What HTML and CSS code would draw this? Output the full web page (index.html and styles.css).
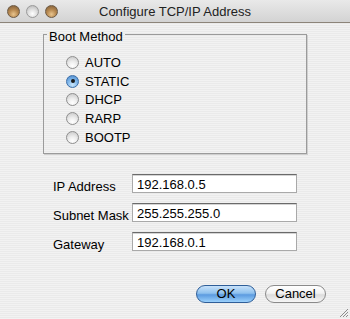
FILE: index.html
```html
<!DOCTYPE html>
<html lang="en">
<head>
    <meta charset="UTF-8">
    <meta name="viewport" content="width=device-width, initial-scale=1.0">
    <title>Configure TCP/IP Address</title>
    <link rel="stylesheet" href="styles.css">
</head>
<body>
    <div class="window">
        <div class="titlebar">
            <div class="lights">
                <span class="light close"></span>
                <span class="light mini"></span>
                <span class="light zoom"></span>
            </div>
            <div class="title">Configure TCP/IP Address</div>
        </div>
        <div class="content">
            <fieldset class="group">
                <legend>Boot Method</legend>
                <label class="radio"><span class="dot"></span>AUTO</label>
                <label class="radio"><span class="dot on"></span>STATIC</label>
                <label class="radio"><span class="dot"></span>DHCP</label>
                <label class="radio"><span class="dot"></span>RARP</label>
                <label class="radio"><span class="dot"></span>BOOTP</label>
            </fieldset>
            <div class="fields">
                <label class="field-label">IP Address</label>
                <div class="input">192.168.0.5</div>
                <label class="field-label">Subnet Mask</label>
                <div class="input">255.255.255.0</div>
                <label class="field-label">Gateway</label>
                <div class="input">192.168.0.1</div>
            </div>
            <div class="buttons">
                <button class="btn default">OK</button>
                <button class="btn">Cancel</button>
            </div>
        </div>
        <svg class="grip" width="10" height="10" viewBox="0 0 10 10">
            <path d="M2 10 L10 2 M5 10 L10 5 M8 10 L10 8" stroke="#8c8c8c" stroke-width="1"/>
        </svg>
    </div>
</body>
</html>
```

FILE: styles.css
```css
body {
    margin: 0;
    font-family: "Liberation Sans", Arial, sans-serif;
    font-size: 13px;
    color: #000;
}
.window {
    position: relative;
    width: 350px;
    height: 319px;
    overflow: hidden;
    background: repeating-linear-gradient(#f2f2f2 0 1px, #eaeaea 1px 2px);
}
.titlebar {
    height: 22px;
    border-bottom: 1px solid #8c8479;
    background: linear-gradient(#e9e9e9, #d3d3d3);
    display: flex;
    align-items: center;
    position: relative;
}
.lights {
    display: flex;
    gap: 6px;
    padding-left: 7px;
}
.light {
    width: 13px;
    height: 13px;
    border-radius: 50%;
    box-sizing: border-box;
    border: 1px solid #6d5a44;
}
.close, .zoom {
    background: radial-gradient(circle at 50% 75%, #e9c58e 0, #b88a52 45%, #7a5a36 100%);
}
.mini {
    border-color: #9a9a9a;
    background: radial-gradient(circle at 50% 70%, #ffffff 0, #dcdcdc 50%, #b0b0b0 100%);
}
.title {
    flex: 1;
    text-align: center;
    padding-right: 58px;
    color: #222;
    font-size: 13px;
}
.content {
    padding-top: 2px;
}
.group {
    margin: 0 0 0 43px;
    width: 264px;
    box-sizing: border-box;
    padding: 10px 0 6px 0;
    border: 1px solid #9b9b9b;
    box-shadow: 1px 1px 0 #cfcfcf;
    display: flex;
    flex-direction: column;
}
.group legend {
    margin-left: 3px;
    padding: 5px 2px 0;
    line-height: 13px;
}
.radio {
    display: flex;
    align-items: center;
    gap: 6px;
    height: 18.75px;
    margin-left: 22px;
}
.dot {
    width: 13px;
    height: 13px;
    border-radius: 50%;
    box-sizing: border-box;
    border: 1px solid #8e8e8e;
    background: radial-gradient(circle at 50% 80%, #ffffff 0, #eeeeee 40%, #c4c4c4 100%);
    display: flex;
    align-items: center;
    justify-content: center;
}
.dot.on {
    border-color: #3c6ea8;
    background: radial-gradient(circle at 50% 80%, #c9e6fb 0, #7db5ea 50%, #4a86c8 100%);
}
.dot.on::after {
    content: "";
    width: 4px;
    height: 4px;
    border-radius: 50%;
    background: #1a1a1a;
}
.fields {
    margin: 20px 0 0 53px;
    display: grid;
    grid-template-columns: 79px 165px;
    row-gap: 10px;
}
.field-label {
    padding-top: 6px;
    line-height: 13px;
    white-space: nowrap;
}
.input {
    height: 19px;
    box-sizing: border-box;
    padding: 1px 4px 0;
    line-height: 17px;
    background: #fff;
    border: 1px solid #a9a9a9;
    border-top-color: #6a6a6a;
    box-shadow: inset 0 1px 0 #d4d4d4;
}
.buttons {
    display: flex;
    justify-content: flex-end;
    gap: 9px;
    margin-top: 34px;
    padding-right: 24px;
}
.btn {
    font-family: inherit;
    font-size: 13px;
    height: 18px;
    width: 61px;
    padding: 0;
    border-radius: 9px;
    border: 1px solid #8a8a8a;
    background: linear-gradient(#ffffff 0, #f2f2f2 45%, #dcdcdc 55%, #f6f6f6 100%);
    color: #000;
    line-height: 16px;
}
.btn.default {
    width: 60px;
    border-color: #2f5e98;
    background: linear-gradient(#c8e2fa 0, #8fc1ee 45%, #5c9be0 55%, #9ad0fb 100%);
}
.grip {
    position: absolute;
    right: 2px;
    bottom: 2px;
}
```
